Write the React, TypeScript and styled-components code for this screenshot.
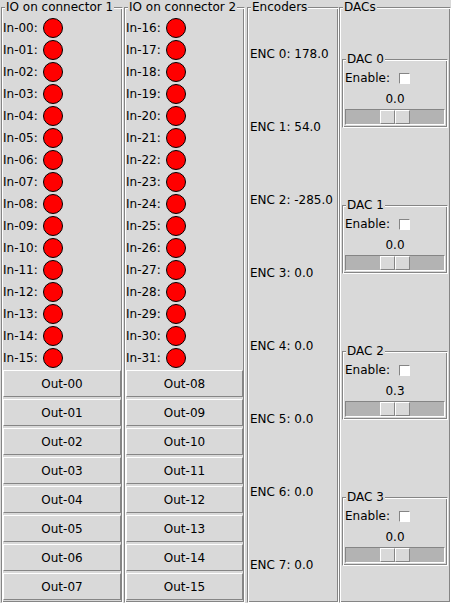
import React from 'react';
import styled, { createGlobalStyle } from 'styled-components';

const BG = '#d9d9d9';
const DARK = '#858585';
const LIGHT = '#ffffff';
const TROUGH = '#b3b3b3';
const FONT = '"DejaVu Sans", "Liberation Sans", sans-serif';

const GlobalStyle = createGlobalStyle`
  html, body {
    margin: 0;
    padding: 0;
    background: ${BG};
    overflow: hidden;
  }
  body {
    font-family: ${FONT};
    font-size: 12px;
    color: #000;
  }
`;

const Window = styled.div`
  display: flex;
  height: 603px;
  padding-left: 1px;
  box-sizing: border-box;
`;

const Column = styled.div<{ $width: number; $gap: number }>`
  width: ${p => p.$width}px;
  margin-left: ${p => p.$gap}px;
  padding-top: 7px;
  display: flex;
  flex-direction: column;
  flex-shrink: 0;
`;

// Tk style "groove" labelframe
const Group = styled.div<{ $fill?: boolean }>`
  position: relative;
  box-sizing: border-box;
  ${p => (p.$fill ? 'flex: 1;' : '')}
  display: flex;
  flex-direction: column;
  padding: 9px 1px 1px 1px;
  border-top: 1px solid ${DARK};
  border-left: 1px solid ${DARK};
  border-bottom: 1px solid ${LIGHT};
  border-right: 1px solid ${LIGHT};
  box-shadow: inset 1px 1px 0 ${LIGHT}, inset -1px -1px 0 ${DARK};
`;

const GroupTitle = styled.span`
  position: absolute;
  top: -8px;
  left: 3px;
  padding: 0 1px;
  line-height: 14px;
  background: ${BG};
  white-space: nowrap;
`;

const InRow = styled.div`
  display: flex;
  align-items: center;
  height: 22px;
  flex-shrink: 0;
`;

const InLabel = styled.span`
  line-height: 14px;
`;

const Led = styled.span<{ $on?: boolean }>`
  width: 20px;
  height: 20px;
  box-sizing: border-box;
  margin-left: 5px;
  border-radius: 50%;
  border: 1px solid #000;
  background: ${p => (p.$on ? '#00c000' : '#ff0000')};
`;

const OutButton = styled.button`
  height: 27px;
  margin: 1px 0;
  padding: 0;
  flex-shrink: 0;
  box-sizing: border-box;
  font-family: ${FONT};
  font-size: 12px;
  color: #000;
  background: ${BG};
  border-top: 1px solid ${LIGHT};
  border-left: 1px solid ${LIGHT};
  border-bottom: 1px solid ${DARK};
  border-right: 1px solid ${DARK};
  border-radius: 0;
  outline: none;
`;

const Stack = styled.div`
  flex: 1;
  display: flex;
  flex-direction: column;
`;

const EncRow = styled.div`
  flex: 1;
  display: flex;
  align-items: center;
  padding-left: 1px;
  white-space: nowrap;
`;

const DacSlot = styled.div`
  flex: 1;
  display: flex;
  flex-direction: column;
  justify-content: center;
  padding: 0 1px;
`;

const DacWrap = styled.div`
  padding-top: 7px;
  display: flex;
  flex-direction: column;
`;

const EnableRow = styled.div`
  display: flex;
  align-items: center;
  height: 18px;
  padding-left: 1px;
`;

const CheckBox = styled.span`
  width: 11px;
  height: 11px;
  box-sizing: border-box;
  margin-left: 9px;
  background: #fff;
  border-top: 1px solid ${DARK};
  border-left: 1px solid ${DARK};
  border-bottom: 1px solid ${LIGHT};
  border-right: 1px solid ${LIGHT};
`;

const ScaleValue = styled.div`
  height: 21px;
  box-sizing: border-box;
  padding-top: 5px;
  line-height: 14px;
  text-align: center;
`;

const Trough = styled.div`
  height: 16px;
  margin: 1px 1px 1px 1px;
  box-sizing: border-box;
  display: flex;
  justify-content: center;
  background: ${TROUGH};
  border-top: 1px solid ${DARK};
  border-left: 1px solid ${DARK};
  border-bottom: 1px solid ${LIGHT};
  border-right: 1px solid ${LIGHT};
`;

const SliderHalf = styled.span`
  width: 15px;
  height: 14px;
  box-sizing: border-box;
  background: ${BG};
  border-top: 1px solid ${LIGHT};
  border-left: 1px solid ${LIGHT};
  border-bottom: 1px solid ${DARK};
  border-right: 1px solid ${DARK};
`;

const pad = (n: number) => String(n).padStart(2, '0');

const encoders = [178.0, 54.0, -285.0, 0.0, 0.0, 0.0, 0.0, 0.0];
const dacs = [0.0, 0.0, 0.3, 0.0];

function IoConnector({ index }: { index: number }) {
  const inBase = index * 16;
  const outBase = index * 8;
  return (
    <Group $fill>
      <GroupTitle>IO on connector {index + 1}</GroupTitle>
      {Array.from({ length: 16 }, (_, i) => (
        <InRow key={i}>
          <InLabel>In-{pad(inBase + i)}:</InLabel>
          <Led />
        </InRow>
      ))}
      {Array.from({ length: 8 }, (_, i) => (
        <OutButton key={i}>Out-{pad(outBase + i)}</OutButton>
      ))}
    </Group>
  );
}

function Dac({ index, value }: { index: number; value: number }) {
  return (
    <DacWrap>
      <Group>
        <GroupTitle>DAC {index}</GroupTitle>
        <EnableRow>
          <span>Enable:</span>
          <CheckBox />
        </EnableRow>
        <ScaleValue>{value.toFixed(1)}</ScaleValue>
        <Trough>
          <SliderHalf />
          <SliderHalf />
        </Trough>
      </Group>
    </DacWrap>
  );
}

export default function App() {
  return (
    <>
      <GlobalStyle />
      <Window>
        <Column $width={122} $gap={0}>
          <IoConnector index={0} />
        </Column>
        <Column $width={121} $gap={1}>
          <IoConnector index={1} />
        </Column>
        <Column $width={92} $gap={2}>
          <Group $fill>
            <GroupTitle>Encoders</GroupTitle>
            <Stack>
              {encoders.map((v, i) => (
                <EncRow key={i}>
                  ENC {i}: {v.toFixed(1)}
                </EncRow>
              ))}
            </Stack>
          </Group>
        </Column>
        <Column $width={112} $gap={0}>
          <Group $fill>
            <GroupTitle>DACs</GroupTitle>
            <Stack>
              {dacs.map((v, i) => (
                <DacSlot key={i}>
                  <Dac index={i} value={v} />
                </DacSlot>
              ))}
            </Stack>
          </Group>
        </Column>
      </Window>
    </>
  );
}
